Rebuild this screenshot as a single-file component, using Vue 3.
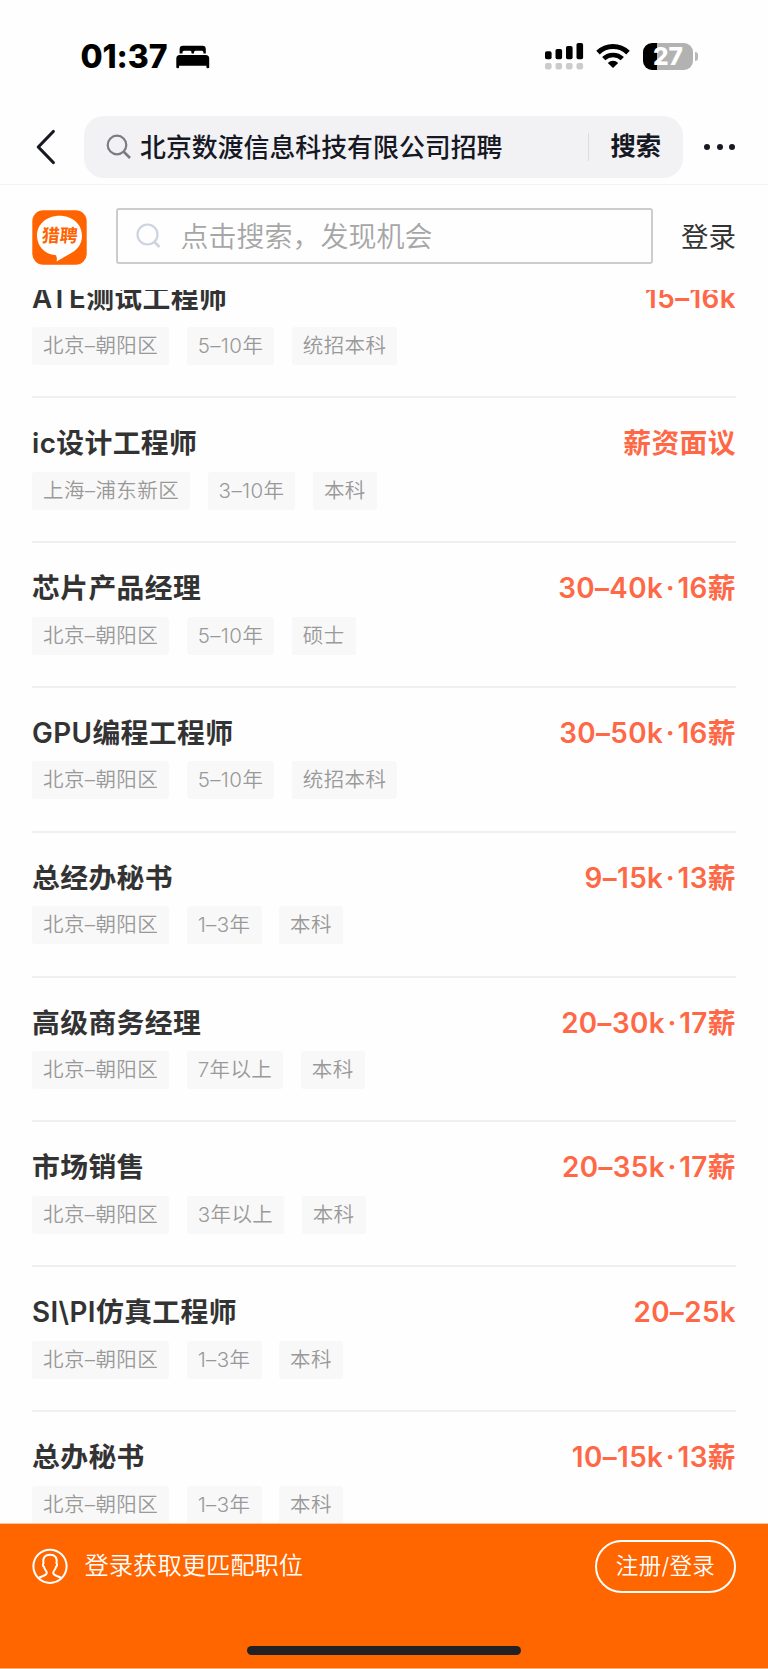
<template>
    <div class="page">
        <div class="status-bar">
            <div class="status-left">
                <span class="time">01:37</span>
                <svg class="bed" width="34" height="24" viewBox="0 0 34 24">
                    <path d="M3.6 8.5V4.2Q3.6 .8 7 .8H26.4Q29.8 .8 29.8 4.2V8.5H27.4V7.2Q27.4 5.7 25.9 5.7H19.5Q18 5.7 18 7.2V8.5H15.5V7.2Q15.5 5.7 14 5.7H8Q6.5 5.7 6.5 7.2V8.5Z" />
                    <path d="M.3 13.5Q.3 10 3.8 10H29.7Q33.2 10 33.2 13.5V22.3Q33.2 23.3 31.8 23.3Q30.4 23.3 30.4 22.3V20.7H3.1V22.3Q3.1 23.3 1.7 23.3Q.3 23.3 .3 22.3Z" />
                </svg>
            </div>
            <div class="status-right">
                <svg width="39" height="27" viewBox="0 0 39 27">
                    <rect x="0" y="8.3" width="6.6" height="8" rx="1.8" />
                    <rect x="10.5" y="6" width="6.6" height="10.3" rx="1.8" />
                    <rect x="21" y="3" width="6.6" height="13.3" rx="1.8" />
                    <rect x="31.5" y="0" width="6.6" height="16.3" rx="1.8" />
                    <g fill="#cbcbcb">
                        <rect v-for="n in 4" :key="n" :x="(n - 1) * 10.5" y="20" width="6.6" height="6.4" rx="1.8" />
                    </g>
                </svg>
                <svg class="wifi" width="34" height="26" viewBox="0 0 34 26">
                    <g fill="none" stroke="#000" stroke-width="5">
                        <path d="M2 9.6A21.5 21.5 0 0 1 32 9.6" />
                        <path d="M7.7 15.7A13.4 13.4 0 0 1 26.3 15.7" stroke-width="4.6" />
                    </g>
                    <path d="M17 25L11.8 19.900A7.600 7.600 0 0 1 22.200 19.900Z" />
                </svg>
                <div class="battery">
                    <div class="battery-body"><span>27</span></div>
                    <div class="battery-tip"></div>
                </div>
            </div>
        </div>

        <div class="nav-bar">
            <svg class="back" width="20" height="36" viewBox="0 0 20 36">
                <path d="M17.3 2.5L2.3 18L17.3 33.5" fill="none" stroke="#161823" stroke-width="3.2" stroke-linecap="round" stroke-linejoin="round" />
            </svg>
            <div class="nav-search">
                <svg width="26" height="26" viewBox="0 0 26 26" fill="none" stroke="#7b7c83" stroke-width="2.2">
                    <circle cx="11" cy="11" r="9.3" />
                    <path d="M17.5 17.5L24 24" stroke-width="2.6" />
                </svg>
                <span class="nav-query">北京数渡信息科技有限公司招聘</span>
                <span class="nav-divider"></span>
                <span class="nav-submit">搜索</span>
            </div>
            <div class="more"><i></i><i></i><i></i></div>
        </div>

        <div class="site-header">
            <svg class="logo" width="55" height="55" viewBox="0 0 55 55">
                <rect x=".3" y=".3" width="54.4" height="54.4" rx="11" fill="#ff6400" />
                <path d="M27.5 5.7C40 5.7 50 14 50 25.5C50 35 44.5 40.5 37.5 44L24.5 51.5Q25.5 48.5 24 45.3C12 44 5 36 5 25.5C5 14 15 5.7 27.5 5.7Z" fill="#fff" />
                <text x="27.5" y="32.5" text-anchor="middle" class="logo-text" transform="skewX(-5) translate(2.5 0)">猎聘</text>
            </svg>
            <div class="site-search">
                <svg width="26" height="26" viewBox="0 0 26 26" fill="none" stroke="#ccd4e0" stroke-width="2.2">
                    <circle cx="11.5" cy="11.5" r="10" />
                    <path d="M18 18.5L23.5 24" stroke-width="2.6" />
                </svg>
                <span>点击搜索，发现机会</span>
            </div>
            <span class="login">登录</span>
        </div>

        <div class="list-wrap">
            <div class="job-list">
                <div v-for="job in jobs" :key="job.title" class="job">
                    <div class="job-head">
                        <span class="job-title">{{ job.title }}</span>
                        <span class="job-salary">{{ job.salary }}<template v-if="job.months"><span class="dot">·</span>{{ job.months }}</template></span>
                    </div>
                    <div class="tags">
                        <span v-for="tag in job.tags" :key="tag" class="tag">{{ tag }}</span>
                    </div>
                </div>
            </div>
        </div>

        <div class="footer">
            <div class="footer-row">
                <svg width="36" height="36" viewBox="0 0 36 36" fill="none" stroke="#fff" stroke-width="2">
                    <circle cx="18" cy="18.3" r="16.6" />
                    <path d="M6.5 30.300C9 27.800 14.800 28.300 14.800 24.800C14.800 22.800 12.500 21.800 12 18.800C10.800 18.300 10.800 15.800 11.500 15.300C10.500 9.300 13 6.800 18 6.800S25.500 9.300 24.500 15.300C25.200 15.800 25.200 18.300 24 18.800C23.500 21.800 21.200 22.800 21.200 24.800C21.200 28.300 27 27.800 29.500 30.300" />
                </svg>
                <span class="footer-text">登录获取更匹配职位</span>
                <button class="register-btn">注册/登录</button>
            </div>
            <div class="home-indicator"></div>
        </div>
    </div>
</template>

<script setup>
const jobs = [
    { title: 'ATE测试工程师', salary: '15–16k', tags: ['北京–朝阳区', '5–10年', '统招本科'] },
    { title: 'ic设计工程师', salary: '薪资面议', tags: ['上海–浦东新区', '3–10年', '本科'] },
    { title: '芯片产品经理', salary: '30–40k', months: '16薪', tags: ['北京–朝阳区', '5–10年', '硕士'] },
    { title: 'GPU编程工程师', salary: '30–50k', months: '16薪', tags: ['北京–朝阳区', '5–10年', '统招本科'] },
    { title: '总经办秘书', salary: '9–15k', months: '13薪', tags: ['北京–朝阳区', '1–3年', '本科'] },
    { title: '高级商务经理', salary: '20–30k', months: '17薪', tags: ['北京–朝阳区', '7年以上', '本科'] },
    { title: '市场销售', salary: '20–35k', months: '17薪', tags: ['北京–朝阳区', '3年以上', '本科'] },
    { title: 'SI\\PI仿真工程师', salary: '20–25k', tags: ['北京–朝阳区', '1–3年', '本科'] },
    { title: '总办秘书', salary: '10–15k', months: '13薪', tags: ['北京–朝阳区', '1–3年', '本科'] }
];
</script>

<style>
body {
    background: #fff;
}
</style>

<style scoped>
.page {
    display: flex;
    flex-direction: column;
    width: 768px;
    height: 1669px;
    overflow: hidden;
    background: #fefefe;
    font-family: Inter, "Noto Sans CJK SC", sans-serif;
    font-feature-settings: "calt" 0;
    color: #333;
    white-space: nowrap;
}

.page * {
    box-sizing: border-box;
}

svg {
    display: block;
    flex: none;
}

.status-bar {
    display: flex;
    justify-content: space-between;
    height: 115px;
    padding: 43px 70px 0 80.5px;
}

.status-left,
.status-right {
    display: flex;
    align-items: flex-start;
}

.time {
    width: 87px;
    font-size: 32px;
    font-weight: 800;
    line-height: 28px;
    letter-spacing: -0.1px;
    color: #000;
}

.bed {
    margin: 2px 0 0 8px;
}

.wifi {
    margin: 0 13px 0 12px;
}

.battery {
    display: flex;
    align-items: center;
    gap: 2px;
}

.battery-body {
    width: 50px;
    height: 27px;
    border-radius: 9px;
    background: linear-gradient(90deg, #000 27%, #b2b2b2 27%);
    color: #fff;
    font-size: 24.5px;
    font-weight: 800;
    line-height: 27px;
    text-align: center;
}

.battery-tip {
    width: 3px;
    height: 9px;
    border-radius: 0 4px 4px 0;
    background: #b8b8b8;
}

.nav-bar {
    display: flex;
    align-items: center;
    height: 70px;
    padding: 0.5px 33px 6px 36px;
    border-bottom: 1px solid #f3f3f3;
}

.back {
    margin-right: 28px;
}

.nav-search {
    display: flex;
    align-items: center;
    width: 599px;
    height: 62px;
    padding: 0 22px;
    border-radius: 20px;
    background: #f2f2f5;
    color: #161823;
    font-size: 25.9px;
    font-weight: 500;
}

.nav-query {
    flex: 1;
    margin-left: 8px;
    padding-top: 2px;
    line-height: 40px;
}

.nav-divider {
    width: 1.5px;
    height: 28px;
    margin-right: 21px;
    background: #dcdce0;
}

.nav-submit {
    padding-bottom: 2px;
    font-size: 25.3px;
    font-weight: 700;
    line-height: 38px;
}

.more {
    display: flex;
    gap: 6.5px;
    margin-left: auto;
}

.more i {
    width: 6px;
    height: 6px;
    border-radius: 50%;
    background: #161823;
}

.site-header {
    display: flex;
    align-items: center;
    height: 105px;
    padding: 0 32px 3px;
}

.logo {
    margin-top: 3px;
}

.logo-text {
    fill: #ff6400;
    font-size: 18px;
    font-weight: 700;
}

.site-search {
    display: flex;
    align-items: center;
    width: 537px;
    height: 56px;
    margin-left: 28.5px;
    padding-left: 18px;
    border: 2px solid #ccc;
    border-radius: 3px;
    color: #a6a6a6;
    font-size: 28px;
    font-weight: 350;
}

.site-search span {
    margin-left: 19px;
    padding-top: 1px;
    line-height: 40px;
}

.login {
    margin-left: auto;
    padding-bottom: 2px;
    font-size: 27.5px;
}

.list-wrap {
    height: 1233px;
    overflow: hidden;
}

.job-list {
    margin: -36.7px 32px 0;
}

.job {
    height: 144.85px;
    padding-top: 27px;
    border-bottom: 2px solid #f0f0f0;
}

.job-head {
    display: flex;
    justify-content: space-between;
    height: 36px;
    line-height: 37px;
    font-size: 27.8px;
    letter-spacing: 0.4px;
}

.job-title {
    font-weight: 600;
}

.job-salary {
    color: #ff6846;
    font-weight: 600;
}

.dot {
    margin: 0 2.5px;
}

.tags {
    display: flex;
    gap: 17.5px;
    margin-top: 10.5px;
}

.tag {
    height: 38px;
    padding: 0 11px;
    border-radius: 3px;
    background: #f8f8f8;
    color: #999;
    font-size: 20.5px;
    font-weight: 350;
    line-height: 37px;
    letter-spacing: 0.4px;
}

.footer {
    display: flex;
    flex-direction: column;
    align-items: center;
    justify-content: space-between;
    height: 146px;
    padding: 15.5px 0 13px;
    border-top: 1px solid #ffc39b;
    border-bottom: 1px solid #ffb27f;
    background: #ff6600;
    color: #fff;
}

.footer-row {
    display: flex;
    align-items: center;
    width: 704px;
    height: 53px;
}

.footer-text {
    margin-left: 16.5px;
    padding-bottom: 2px;
    font-size: 24.3px;
    font-weight: 350;
    line-height: 36px;
}

.register-btn {
    width: 141px;
    height: 53px;
    margin-left: auto;
    padding: 0;
    border: 2px solid #fff;
    border-radius: 27px;
    background: none;
    color: #fff;
    font: inherit;
    font-size: 22.5px;
    font-weight: 350;
    line-height: 46px;
    letter-spacing: 0.3px;
}

.home-indicator {
    width: 274px;
    height: 9px;
    border-radius: 5px;
    background: #222;
}
</style>
